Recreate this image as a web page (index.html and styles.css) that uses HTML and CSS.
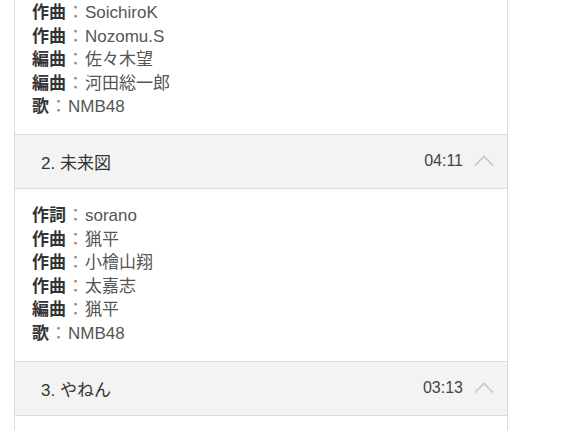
FILE: index.html
```html
<!DOCTYPE html>
<html lang="ja">
<head>
<meta charset="utf-8">
<link rel="stylesheet" href="styles.css">
</head>
<body>
<div class="tracks">
  <div class="credits credits-top">
    <div class="line"><b>作曲</b><span class="sep">：</span>SoichiroK</div>
    <div class="line"><b>作曲</b><span class="sep">：</span>Nozomu.S</div>
    <div class="line"><b>編曲</b><span class="sep">：</span>佐々木望</div>
    <div class="line"><b>編曲</b><span class="sep">：</span>河田総一郎</div>
    <div class="line"><b>歌</b><span class="sep">：</span>NMB48</div>
  </div>
  <div class="track-head">
    <span class="title">2. 未来図</span>
    <span class="time">04:11</span>
    <svg class="chev" width="20" height="12" viewBox="0 0 20 12"><polyline points="1,11.5 10,2.5 19,11.5" fill="none" stroke="#c6c6c6" stroke-width="1.6"/></svg>
  </div>
  <div class="credits">
    <div class="line"><b>作詞</b><span class="sep">：</span>sorano</div>
    <div class="line"><b>作曲</b><span class="sep">：</span>猟平</div>
    <div class="line"><b>作曲</b><span class="sep">：</span>小檜山翔</div>
    <div class="line"><b>作曲</b><span class="sep">：</span>太嘉志</div>
    <div class="line"><b>編曲</b><span class="sep">：</span>猟平</div>
    <div class="line"><b>歌</b><span class="sep">：</span>NMB48</div>
  </div>
  <div class="track-head">
    <span class="title">3. やねん</span>
    <span class="time">03:13</span>
    <svg class="chev" width="20" height="12" viewBox="0 0 20 12"><polyline points="1,11.5 10,2.5 19,11.5" fill="none" stroke="#c6c6c6" stroke-width="1.6"/></svg>
  </div>
  <div class="credits credits-empty"></div>
</div>
</body>
</html>
```
FILE: styles.css
```css
html, body {
  margin: 0;
  padding: 0;
  background: #ffffff;
}
body {
  font-family: "Liberation Sans", "Noto Sans CJK JP", sans-serif;
  font-size: 17px;
  color: #444;
  overflow: hidden;
  height: 430px;
}
.tracks {
  margin-left: 14px;
  width: 492px;
  border-left: 1px solid #dcdcdc;
  border-right: 1px solid #dcdcdc;
}
.credits {
  padding: 15px 17px 15px 17px;
  line-height: 23.6px;
  color: #555;
}
.credits-top {
  padding-top: 1px;
}
.credits-empty {
  height: 40px;
  padding: 0;
}
.line b {
  font-weight: bold;
  color: #333;
}
.sep {
  display: inline-block;
  width: 19px;
  line-height: 1;
  text-align: center;
  color: #888;
  font-family: "Noto Sans CJK JP", sans-serif;
}
.track-head {
  display: flex;
  align-items: center;
  height: 53px;
  background: #f3f3f3;
  border-top: 1px solid #dcdcdc;
  border-bottom: 1px solid #dcdcdc;
  padding: 0 13px 0 26px;
  color: #333;
}
.title {
  flex: 1;
}
.time {
  color: #444;
  font-size: 16px;
}
.chev {
  margin-left: 11px;
  margin-top: -2px;
}
```
